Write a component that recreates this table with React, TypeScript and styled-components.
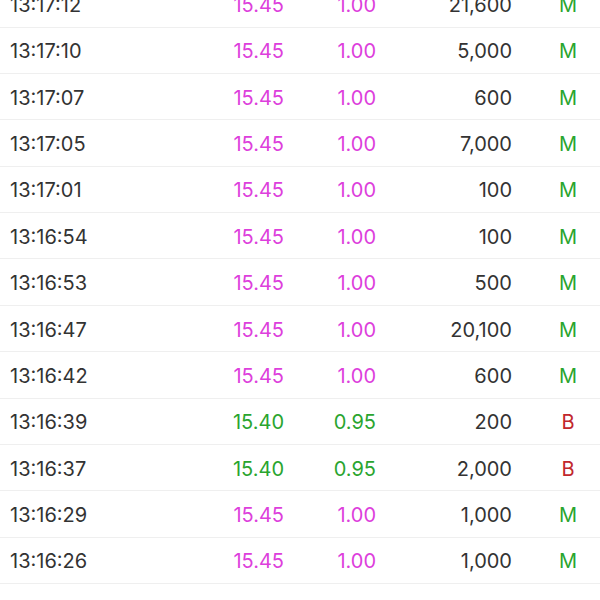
import React from 'react';
import styled, { createGlobalStyle } from 'styled-components';

const GlobalStyle = createGlobalStyle`
    html, body {
        margin: 0;
        padding: 0;
        background: #ffffff;
        overflow: hidden;
    }
`;

const Wrapper = styled.div`
    width: 600px;
    height: 600px;
    overflow: hidden;
    background: #ffffff;
    font-family: Inter, "Liberation Sans", Arial, sans-serif;
`;

const List = styled.div`
    margin-top: -18.9px;
`;

const Row = styled.div`
    box-sizing: border-box;
    height: 46.4px;
    padding-left: 10px;
    padding-top: 2px;
    display: grid;
    grid-template-columns: 174px 100px 92px 136px 1fr;
    align-items: center;
    border-bottom: 1px solid #efefef;
    font-size: 20px;
    color: #333333;
`;

type Tone = 'up' | 'flat' | 'plain';

const toneColor: Record<Tone, string> = {
    up: '#dd3fdc',
    flat: '#2aa52f',
    plain: '#333333',
};

const Cell = styled.div<{ $tone?: Tone, $align?: 'left' | 'right' }>`
    text-align: ${p => p.$align || 'right'};
    color: ${p => toneColor[p.$tone || 'plain']};
    white-space: nowrap;
`;

const Kind = styled.div<{ $kind: string }>`
    padding-left: 24px;
    width: 64px;
    text-align: center;
    color: ${p => p.$kind === 'B' ? '#c1272d' : '#2aa52f'};
`;

interface Trade {
    time: string,
    price: string,
    change: string,
    volume: string,
    kind: string,
}

const trades: Trade[] = [
    { time: '13:17:12', price: '15.45', change: '1.00', volume: '21,600', kind: 'M' },
    { time: '13:17:10', price: '15.45', change: '1.00', volume: '5,000', kind: 'M' },
    { time: '13:17:07', price: '15.45', change: '1.00', volume: '600', kind: 'M' },
    { time: '13:17:05', price: '15.45', change: '1.00', volume: '7,000', kind: 'M' },
    { time: '13:17:01', price: '15.45', change: '1.00', volume: '100', kind: 'M' },
    { time: '13:16:54', price: '15.45', change: '1.00', volume: '100', kind: 'M' },
    { time: '13:16:53', price: '15.45', change: '1.00', volume: '500', kind: 'M' },
    { time: '13:16:47', price: '15.45', change: '1.00', volume: '20,100', kind: 'M' },
    { time: '13:16:42', price: '15.45', change: '1.00', volume: '600', kind: 'M' },
    { time: '13:16:39', price: '15.40', change: '0.95', volume: '200', kind: 'B' },
    { time: '13:16:37', price: '15.40', change: '0.95', volume: '2,000', kind: 'B' },
    { time: '13:16:29', price: '15.45', change: '1.00', volume: '1,000', kind: 'M' },
    { time: '13:16:26', price: '15.45', change: '1.00', volume: '1,000', kind: 'M' },
    { time: '13:16:24', price: '15.45', change: '1.00', volume: '1,000', kind: 'M' },
];

export default function App() {
    return (
        <Wrapper>
            <GlobalStyle />
            <List>
                {trades.map((t, i) => {
                    const tone: Tone = t.price === '15.40' ? 'flat' : 'up';
                    return (
                        <Row key={i}>
                            <Cell $align="left">{t.time}</Cell>
                            <Cell $tone={tone}>{t.price}</Cell>
                            <Cell $tone={tone}>{t.change}</Cell>
                            <Cell>{t.volume}</Cell>
                            <Kind $kind={t.kind}>{t.kind}</Kind>
                        </Row>
                    );
                })}
            </List>
        </Wrapper>
    );
}
